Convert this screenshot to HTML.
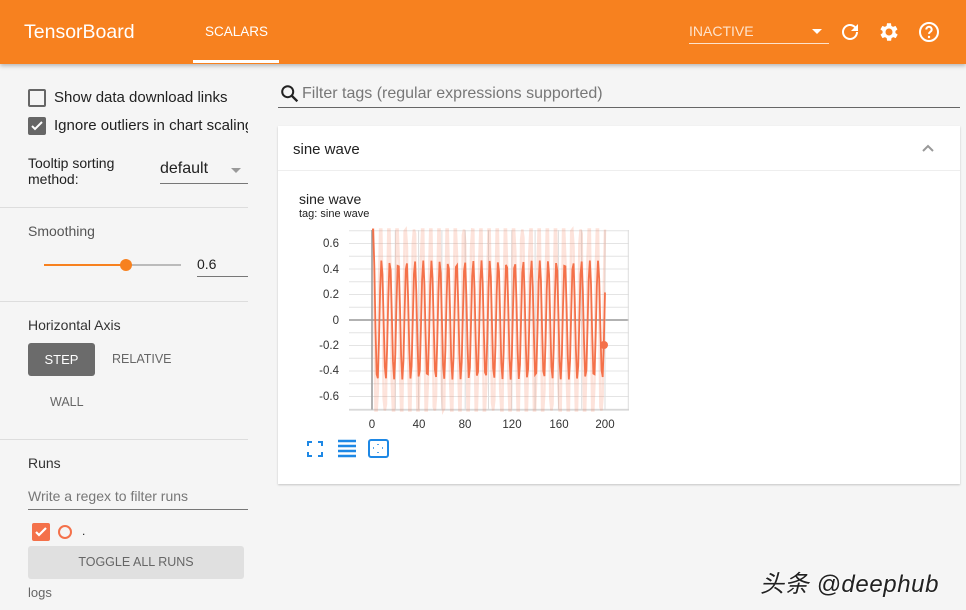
<!DOCTYPE html>
<html><head><meta charset="utf-8"><style>
*{box-sizing:border-box;margin:0;padding:0}
body{width:966px;height:610px;overflow:hidden;background:#f5f5f5;font-family:"Liberation Sans",sans-serif;color:#212121;position:relative}
.hdr{position:absolute;left:0;top:0;width:966px;height:64px;background:#f7811f;box-shadow:0 2px 4px rgba(0,0,0,.25);color:#fff}
.abs{position:absolute}
.side{position:absolute;left:0;top:64px;width:260px;height:546px}
.sep{position:absolute;left:0;width:248px;height:1px;background:#ddd}
.cb{position:absolute;width:18px;height:18px;border:2px solid #666;border-radius:2px}
</style></head><body>
<div class="hdr">
 <div class="abs" style="left:24px;top:21px;font-size:19.5px">TensorBoard</div>
 <div class="abs" style="left:205px;top:24px;font-size:13.5px">SCALARS</div>
 <div class="abs" style="left:193px;top:60px;width:86px;height:3px;background:#fff"></div>
 <div class="abs" style="left:689px;top:23px;font-size:14px;color:#fde3cc">INACTIVE</div>
 <div class="abs" style="left:812px;top:29px;border-left:5px solid transparent;border-right:5px solid transparent;border-top:5px solid #fff"></div>
 <div class="abs" style="left:689px;top:43px;width:140px;height:1px;background:#fde3cc"></div>
 <svg class="abs" style="left:838px;top:20px" width="24" height="24" viewBox="0 0 24 24"><path fill="#fff" d="M17.65 6.35A7.96 7.96 0 0012 4a8 8 0 108 8h-2a6 6 0 11-1.76-4.24L13 11h7V4l-2.35 2.35z"/></svg>
 <svg class="abs" style="left:877px;top:20px" width="24" height="24" viewBox="0 0 24 24"><path fill="#fff" d="M19.4 13a7.6 7.6 0 000-2l2.1-1.6-2-3.5-2.5 1a7.3 7.3 0 00-1.7-1L15 3.2h-4l-.4 2.7a7.3 7.3 0 00-1.7 1l-2.5-1-2 3.5L6.6 11a7.6 7.6 0 000 2l-2.1 1.6 2 3.5 2.5-1c.5.4 1.1.7 1.7 1l.4 2.7h4l.4-2.7c.6-.3 1.2-.6 1.7-1l2.5 1 2-3.5L19.4 13zM13 15.5a3.5 3.5 0 110-7 3.5 3.5 0 010 7z" transform="translate(-1 0)"/></svg>
 <svg class="abs" style="left:917px;top:20px" width="24" height="24" viewBox="0 0 24 24"><circle cx="12" cy="12" r="9" fill="none" stroke="#fff" stroke-width="2"/><path d="M9.3 9.5a2.7 2.7 0 115 1.4c-.8 1-2.3 1.4-2.3 3" fill="none" stroke="#fff" stroke-width="2"/><circle cx="12" cy="17" r="1.2" fill="#fff"/></svg>
</div>
<div class="side">
 <div class="cb" style="left:28px;top:25px"></div>
 <div class="abs" style="left:54px;top:25px;font-size:15px">Show data download links</div>
 <div class="cb" style="left:28px;top:53px;background:#666"><svg width="14" height="14" viewBox="0 0 14 14" style="position:absolute;left:0;top:0"><path d="M2 7l3 3 7-7" stroke="#fff" stroke-width="2" fill="none"/></svg></div>
 <div class="abs" style="left:54px;top:53px;font-size:15px;width:194px;white-space:nowrap;overflow:hidden">Ignore outliers in chart scaling</div>
 <div class="abs" style="left:28px;top:91px;font-size:14px;line-height:16px">Tooltip sorting<br>method:</div>
 <div class="abs" style="left:160px;top:96px;font-size:16px">default</div>
 <div class="abs" style="left:231px;top:104px;border-left:5px solid transparent;border-right:5px solid transparent;border-top:5px solid #999"></div>
 <div class="abs" style="left:160px;top:119px;width:88px;height:1px;background:#777"></div>
 <div class="sep" style="top:143px"></div>
 <div class="abs" style="left:28px;top:159px;font-size:14px;color:#555">Smoothing</div>
 <div class="abs" style="left:44px;top:200px;width:82px;height:2px;background:#f7811f"></div>
 <div class="abs" style="left:126px;top:200px;width:55px;height:2px;background:#bbb"></div>
 <div class="abs" style="left:120px;top:195px;width:12px;height:12px;border-radius:50%;background:#f7811f"></div>
 <div class="abs" style="left:197px;top:192px;font-size:14px">0.6</div>
 <div class="abs" style="left:197px;top:212px;width:51px;height:1px;background:#777"></div>
 <div class="sep" style="top:237px"></div>
 <div class="abs" style="left:28px;top:253px;font-size:14px;color:#333">Horizontal Axis</div>
 <div class="abs" style="left:28px;top:279px;width:67px;height:33px;background:#6b6b6b;border-radius:3px;color:#fff;font-size:13px;text-align:center;line-height:33px">STEP</div>
 <div class="abs" style="left:112px;top:288px;font-size:12.5px;color:#666">RELATIVE</div>
 <div class="abs" style="left:50px;top:331px;font-size:12.5px;color:#666">WALL</div>
 <div class="sep" style="top:375px"></div>
 <div class="abs" style="left:28px;top:391px;font-size:14px;color:#333">Runs</div>
 <div class="abs" style="left:28px;top:424px;font-size:14px;color:#777">Write a regex to filter runs</div>
 <div class="abs" style="left:28px;top:445px;width:220px;height:1px;background:#777"></div>
 <div class="abs" style="left:32px;top:459px;width:18px;height:18px;background:#f4714a;border-radius:2px"><svg width="18" height="18" viewBox="0 0 18 18"><path d="M4 9l3 3 7-7" stroke="#fff" stroke-width="2.2" fill="none"/></svg></div>
 <div class="abs" style="left:58px;top:461px;width:14px;height:14px;border:2px solid #f4714a;border-radius:50%"></div>
 <div class="abs" style="left:82px;top:460px;font-size:12px">.</div>
 <div class="abs" style="left:28px;top:482px;width:216px;height:33px;background:#e0e0e0;border-radius:3px;text-align:center;line-height:33px;font-size:12.5px;color:#666">TOGGLE ALL RUNS</div>
 <div class="abs" style="left:28px;top:521px;font-size:13px;color:#666">logs</div>
</div>
<svg class="abs" style="left:279px;top:83px" width="22" height="22" viewBox="0 0 24 24"><circle cx="9.5" cy="9.5" r="6" fill="none" stroke="#222" stroke-width="2.2"/><path d="M14 14l6 6" stroke="#222" stroke-width="2.6"/></svg>
<div class="abs" style="left:302px;top:85px;font-size:16px;color:#777">Filter tags (regular expressions supported)</div>
<div class="abs" style="left:278px;top:107px;width:682px;height:1px;background:#666"></div>
<div class="abs" style="left:278px;top:126px;width:682px;height:358px;background:#fff;box-shadow:0 1px 2px rgba(0,0,0,.2)">
 <div class="abs" style="left:15px;top:15px;font-size:15px">sine wave</div>
 <svg class="abs" style="left:643px;top:17px" width="14" height="10" viewBox="0 0 14 10"><path d="M2 8l5-5 5 5" stroke="#999" stroke-width="2" fill="none"/></svg>
 <div class="abs" style="left:0;top:44px;width:682px;height:1px;background:#eee"></div>
 <div class="abs" style="left:21px;top:65px;font-size:14px">sine wave</div>
 <div class="abs" style="left:21px;top:82px;font-size:11px">tag: sine wave</div>
</div>
<svg class="abs" style="left:290px;top:225px" width="350" height="210" id="ch">
 <g id="grid"></g>
 <g font-size="11.5" fill="#333" font-family="Liberation Sans" text-anchor="end">
  <text x="49" y="22">0.6</text><text x="49" y="48">0.4</text><text x="49" y="73">0.2</text><text x="49" y="99">0</text><text x="49" y="124">-0.2</text><text x="49" y="149">-0.4</text><text x="49" y="175">-0.6</text>
 </g>
 <g font-size="11.5" fill="#333" font-family="Liberation Sans" text-anchor="middle">
  <text x="82" y="203">0</text><text x="129" y="203">40</text><text x="175" y="203">80</text><text x="222" y="203">120</text><text x="269" y="203">160</text><text x="315" y="203">200</text>
 </g>
 <polyline id="raw" fill="none" stroke="#f4714a" stroke-opacity="0.2" stroke-width="2.5"/>
 <polyline id="sm" fill="none" stroke="#f4714a" stroke-width="1.8"/>
 <circle cx="314" cy="120" r="4" fill="#f4714a"/>
</svg>
<svg class="abs" style="left:306px;top:439px" width="90" height="20" viewBox="0 0 90 20">
 <path d="M2 7V3h4M12 3h4v4M16 13v4h-4M6 17H2v-4" stroke="#1e88e5" stroke-width="2" fill="none"/>
 <path d="M32 2h18M32 7h18M32 12h18M32 17h18" stroke="#1e88e5" stroke-width="2.4"/>
 <rect x="63" y="1" width="19" height="17" rx="2" fill="none" stroke="#1e88e5" stroke-width="2"/>
 <path d="M72 5v1M72 13v1M67 9h1M76 9h1" stroke="#1e88e5" stroke-width="1.5"/>
</svg>
<div class="abs" style="left:760px;top:564px;font-size:24px;letter-spacing:0.6px;font-style:italic;color:#222;text-shadow:0 0 2px #fff,0 0 2px #fff;font-family:'Liberation Sans','Noto Sans CJK SC',sans-serif">头条 @deephub</div>
<script>
(function(){
 var g=document.getElementById('grid'),s='';
 var X0=82,XS=1.165,Y0=95,YS=127.5;
 for(var v=-0.7;v<=0.71;v+=0.1){var y=Y0-v*YS;s+='<line x1="59" x2="339" y1="'+y+'" y2="'+y+'" stroke="'+(Math.abs(v)<0.01?'#999':'#e4e4e4')+'" stroke-width="'+(Math.abs(v)<0.01?1.5:1)+'"/>';}
 for(var t=0;t<=220;t+=20){var x=X0+t*XS;s+='<line y1="5" y2="185" x1="'+x+'" x2="'+x+'" stroke="'+(t==0?'#999':'#ddd')+'" stroke-width="'+(t==0?1.5:1)+'"/>';}
 s+='<line x1="59" x2="339" y1="185" y2="185" stroke="#ccc"/>';
 g.innerHTML=s;
 var r='',m='',e=0,w=0;
 for(var i=0;i<=200;i++){var v=Math.sin(i*2*Math.PI/7.15+1.3);e=e*0.6+v*0.4;w=w*0.6+0.4;var sv=e/w;if(i>1)sv*=0.9;
  var x=X0+i*XS;var cy=function(a){a=Math.max(-0.71,Math.min(0.71,a));return Y0-a*YS};
  r+=x+','+cy(v)+' ';m+=x+','+cy(sv)+' ';}
 document.getElementById('raw').setAttribute('points',r);
 document.getElementById('sm').setAttribute('points',m);
})();
</script>
</body></html>
